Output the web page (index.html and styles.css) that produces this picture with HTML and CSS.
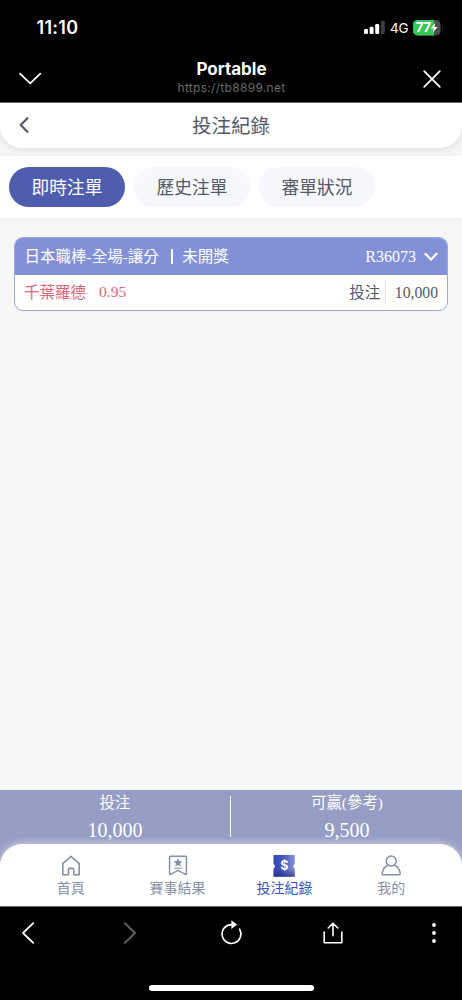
FILE: index.html
```html
<!DOCTYPE html>
<html lang="zh-Hant">
<head>
<meta charset="utf-8">
<meta name="viewport" content="width=device-width, initial-scale=1">
<title>投注紀錄</title>
<link rel="stylesheet" href="styles.css">
</head>
<body>
<div class="screen">
  <div class="status">
    <span class="clock">11:10</span>
    <div class="indicators">
      <svg class="signal" width="21" height="13" viewBox="0 0 21 13"><rect x="0" y="8" width="4" height="5" rx="1.2" fill="#fff"/><rect x="5.6" y="5.8" width="4" height="7.2" rx="1.2" fill="#fff"/><rect x="11.2" y="3" width="4" height="10" rx="1.2" fill="#fff"/><rect x="16.8" y="0" width="4" height="13" rx="1.2" fill="#3c3c3e"/></svg>
      <span class="network">4G</span>
      <svg class="battery" width="31" height="16" viewBox="0 0 31 16"><defs><clipPath id="cell"><rect width="27.5" height="15.4" rx="4.5"/></clipPath></defs><g clip-path="url(#cell)"><rect width="28" height="16" fill="#4c4c4e"/><rect width="21" height="16" fill="#34c759"/></g><path d="M29 5.5q1.5 2.2 0 4.4z" fill="#4c4c4e"/><text x="2.8" y="12.3" class="charge">77</text><path d="M22.3 2.8 17.8 8.5h3L19.8 12.8 24.5 7.1h-3z" fill="#fff"/></svg>
    </div>
  </div>
  <header class="browser">
    <svg width="24" height="14" viewBox="0 0 24 14" class="line"><path d="M2 1.6 12.2 11.3 22.3 1.6" stroke-width="1.8"/></svg>
    <div class="site"><div class="site-name">Portable</div><div class="site-url">https://tb8899.net</div></div>
    <svg width="18" height="18" viewBox="0 0 18 18" class="line"><path d="M1.2 1.2 16.8 16.8M16.8 1.2 1.2 16.8" stroke-width="1.7"/></svg>
  </header>

  <main class="app">
    <div class="title-bar">
      <svg class="back line" width="10" height="16" viewBox="0 0 10 16"><path d="M8.4 1.2 1.7 8 8.4 14.8" stroke-width="2.2"/></svg>
      <h1 class="title">投注紀錄</h1>
    </div>
    <div class="tabs">
      <div class="tab tab-active">即時注單</div>
      <div class="tab">歷史注單</div>
      <div class="tab">審單狀況</div>
    </div>
    <section class="bet">
      <div class="bet-head">
        <span>日本職棒-全場-讓分</span><i class="bar"></i><span>未開獎</span>
        <span class="bet-id">R36073</span>
        <svg class="line" width="14" height="10" viewBox="0 0 14 10"><path d="M1.4 1.8 7 7.6 12.6 1.8" stroke-width="2.2"/></svg>
      </div>
      <div class="bet-body">
        <span class="team">千葉羅德</span><span class="odds">0.95</span>
        <span class="stake-label">投注</span><span class="stake">10,000</span>
      </div>
    </section>
    <div class="bottom">
      <div class="totals">
        <div class="total"><span>投注</span><b>10,000</b></div>
        <i class="divider"></i>
        <div class="total"><span>可贏(參考)</span><b>9,500</b></div>
      </div>
      <nav class="nav">
        <div class="nav-item">
          <svg width="22" height="22" viewBox="0 0 22 22" class="line"><path d="M2.8 8.6 11 1.3 19.2 8.6V19.7H13.8V14.2Q13.8 13.4 13 13.4H9.2Q8.4 13.4 8.4 14.2V19.7H2.8Z" stroke-width="1.6"/></svg>
          <span>首頁</span>
        </div>
        <div class="nav-item">
          <svg width="22" height="22" viewBox="0 0 22 22" class="line"><path d="M3.3 1.3H18.7Q19.4 1.3 19.4 2V18.8Q19.4 19.8 18.4 19.3L11 15.3 3.6 19.3Q2.6 19.8 2.6 18.8V2Q2.6 1.3 3.3 1.3Z" stroke-width="1.5"/><path d="m11 3.2 1.3 2.8 3.1.4-2.3 2.1.7 3L11 10l-2.8 1.5.7-3-2.3-2.1 3.1-.4z" fill="currentColor" stroke="none"/><path d="M7.5 13.2h7" stroke-width="1"/></svg>
          <span>賽事結果</span>
        </div>
        <div class="nav-item nav-active">
          <svg width="22" height="22" viewBox="0 0 22 22"><defs><linearGradient id="ticket"><stop offset="0" stop-color="#3046b5"/><stop offset=".45" stop-color="#4657bd"/><stop offset="1" stop-color="#8792d8"/></linearGradient><linearGradient id="shade" x2="0" y2="1"><stop offset=".65" stop-color="#202777" stop-opacity="0"/><stop offset="1" stop-color="#202777" stop-opacity=".65"/></linearGradient></defs><path d="M.5 0H21.8V9.2a2.2 2.2 0 0 0 0 4.2V21.7H.5V13.4a2.2 2.2 0 0 0 0-4.2Z" fill="url(#ticket)"/><path d="M.5 0H21.8V9.2a2.2 2.2 0 0 0 0 4.2V21.7H.5V13.4a2.2 2.2 0 0 0 0-4.2Z" fill="url(#shade)"/><text x="11.4" y="15.2" class="dollar">$</text></svg>
          <span>投注紀錄</span>
        </div>
        <div class="nav-item">
          <svg width="22" height="22" viewBox="0 0 22 22" class="line"><circle cx="11.2" cy="6" r="5" stroke-width="1.5"/><path d="M7.8 10.3C4.8 11.6 2.7 14.6 2.2 18.4Q2 19.8 3.3 19.8H19.1Q20.4 19.8 20.2 18.4C19.7 14.6 17.6 11.6 14.6 10.3" stroke-width="1.5"/></svg>
          <span>我的</span>
        </div>
      </nav>
    </div>
  </main>

  <footer class="toolbar">
    <div class="tools">
      <div class="tool"><svg class="line" width="14" height="24" viewBox="0 0 14 24"><path d="M12.2 2.2 2 12 12.2 21.8" stroke-width="1.8"/></svg></div>
      <div class="tool"><svg class="line dim" width="14" height="24" viewBox="0 0 14 24"><path d="M1.8 2.2 12 12 1.8 21.8" stroke-width="1.8"/></svg></div>
      <div class="tool"><svg class="line" width="24" height="26" viewBox="0 0 24 26"><path d="M20.6 9.2A9.4 9.4 0 1 1 13 4.6" stroke-width="1.6"/><path d="M12.4.3 18 4.6 12.4 8.9Z" fill="#fff" stroke="none"/></svg></div>
      <div class="tool"><svg class="line" width="22" height="24" viewBox="0 0 22 24"><path d="M2.2 11V21.8H19.8V11M11 14.8V2.5M6.2 7 11 2.2 15.8 7" stroke-width="1.6"/></svg></div>
      <div class="tool"><svg width="6" height="24" viewBox="0 0 6 24" fill="#fff"><circle cx="3" cy="4" r="1.9"/><circle cx="3" cy="12" r="1.9"/><circle cx="3" cy="20" r="1.9"/></svg></div>
    </div>
    <div class="home-indicator"></div>
  </footer>
</div>
</body>
</html>
```
FILE: styles.css
```css
* { box-sizing: border-box; }
body { margin: 0; background: #000; }
svg { display: block; flex: none; }
.line { fill: none; stroke: currentColor; stroke-linecap: round; stroke-linejoin: round; }

.screen {
  width: 462px;
  height: 1000px;
  display: flex;
  flex-direction: column;
  overflow: hidden;
  background: #000;
  color: #fff;
  font-family: Inter, "Liberation Sans", sans-serif;
}

.status {
  height: 56px;
  display: flex;
  justify-content: space-between;
  padding: 0 18px 0 36.5px;
}
.clock { padding-top: 17px; font-size: 18px; line-height: 22px; font-weight: 600; letter-spacing: .3px; }
.indicators { display: flex; align-items: flex-start; padding-top: 20px; }
.signal { margin-top: 1px; }
.network { width: 28px; padding-left: 5px; font-size: 13.5px; line-height: 16px; white-space: nowrap; letter-spacing: -.3px; }
.charge { font: 700 13.5px Inter, sans-serif; fill: #fff; letter-spacing: -.6px; }

.browser {
  height: 46px;
  display: flex;
  justify-content: space-between;
  align-items: center;
  padding: 0 21px 0 18px;
}
.site { text-align: center; padding: 0 2px 3px 0; }
.site-name { font-size: 17px; line-height: 21px; font-weight: 650; }
.site-url { font-size: 12px; line-height: 16px; color: #6b6b6b; letter-spacing: .3px; }

.app {
  height: 804px;
  display: flex;
  flex-direction: column;
  overflow: hidden;
  background: #f7f7f7;
  color: #555866;
  border-top: 1px solid #666;
  font-family: "Liberation Serif", "Noto Sans CJK TC", serif;
}
.title-bar {
  height: 44.5px;
  flex: none;
  display: flex;
  align-items: center;
  padding: 0 19px;
  background: #fff;
  border-radius: 0 0 22px 22px;
  box-shadow: 0 1px 8px rgba(0, 0, 0, .12);
}
.back { width: 10px; }
.title { flex: 1; margin: 0 10px 0 0; padding-top: 4px; text-align: center; font-size: 19.5px; font-weight: 400; line-height: 28px; }
.tabs {
  height: 62px;
  flex: none;
  margin-top: 8.5px;
  display: flex;
  gap: 9px;
  padding: 11px 9px;
  background: #fff;
  box-shadow: 0 1px 6px rgba(0, 0, 0, .06);
}
.tab {
  width: 116px;
  height: 40px;
  border-radius: 20px;
  background: #f7f8fd;
  text-align: center;
  font-size: 17.7px;
  line-height: 42px;
}
.tab-active { background: #4f5dae; color: #fff; }

.bet {
  margin: 19px 14px 0;
  border: 1px solid #9da6d5;
  border-radius: 9px;
  overflow: hidden;
  background: #fff;
  font-size: 15.5px;
}
.bet-head {
  height: 37px;
  display: flex;
  align-items: center;
  padding: 0 9px 0 9.5px;
  background: #8290d8;
  color: #fff;
  line-height: 36px;
}
.bar { width: 2px; height: 15px; margin: 0 9px 0 12.5px; background: #fff; }
.bet-id { margin: 0 8px 0 auto; font-size: 16px; }
.bet-body { height: 35px; display: flex; align-items: center; padding: 0 9px; line-height: 34px; }
.team, .odds { color: #da6678; }
.odds { margin-left: 13px; font-size: 15.5px; line-height: 32px; padding-bottom: 1px; }
.stake-label { margin-left: auto; }
.stake { margin-left: 4.5px; padding-left: 9px; border-left: 1px solid #e0e2f2; line-height: 25px; font-size: 15.7px; }

.bottom { margin-top: auto; height: 116px; background: #959dc4; display: flex; flex-direction: column; }
.totals { height: 53.5px; flex: none; display: flex; color: #fff; }
.total { flex: 1; display: flex; flex-direction: column; align-items: center; font-size: 15.4px; line-height: 25px; }
.total b { font-size: 20px; line-height: 30px; font-weight: 400; }
.divider { width: 1px; height: 41px; margin: 6px 1px 0 0; background: #fff; }
.nav {
  height: 62.5px;
  display: flex;
  justify-content: center;
  background: #fff;
  border-radius: 22px 22px 0 0;
  box-shadow: 0 0 8px rgba(255, 255, 255, .65);
  color: #8790a7;
}
.nav-item { width: 106.8px; padding-top: 11.5px; display: flex; flex-direction: column; align-items: center; gap: 2px; font-size: 14px; line-height: 20px; }
.nav-active { color: #3d50be; }
.dollar { font: 700 12.5px Inter, sans-serif; fill: #fff; text-anchor: middle; }

.toolbar { flex: 1; border-top: 1px solid #666; display: flex; flex-direction: column; align-items: center; }
.tools { height: 52px; display: flex; align-items: center; }
.tool { width: 101.5px; display: flex; justify-content: center; }
.dim { color: #666; }
.home-indicator { width: 165px; height: 6px; margin-top: 26px; border-radius: 3px; background: #fff; }
```
